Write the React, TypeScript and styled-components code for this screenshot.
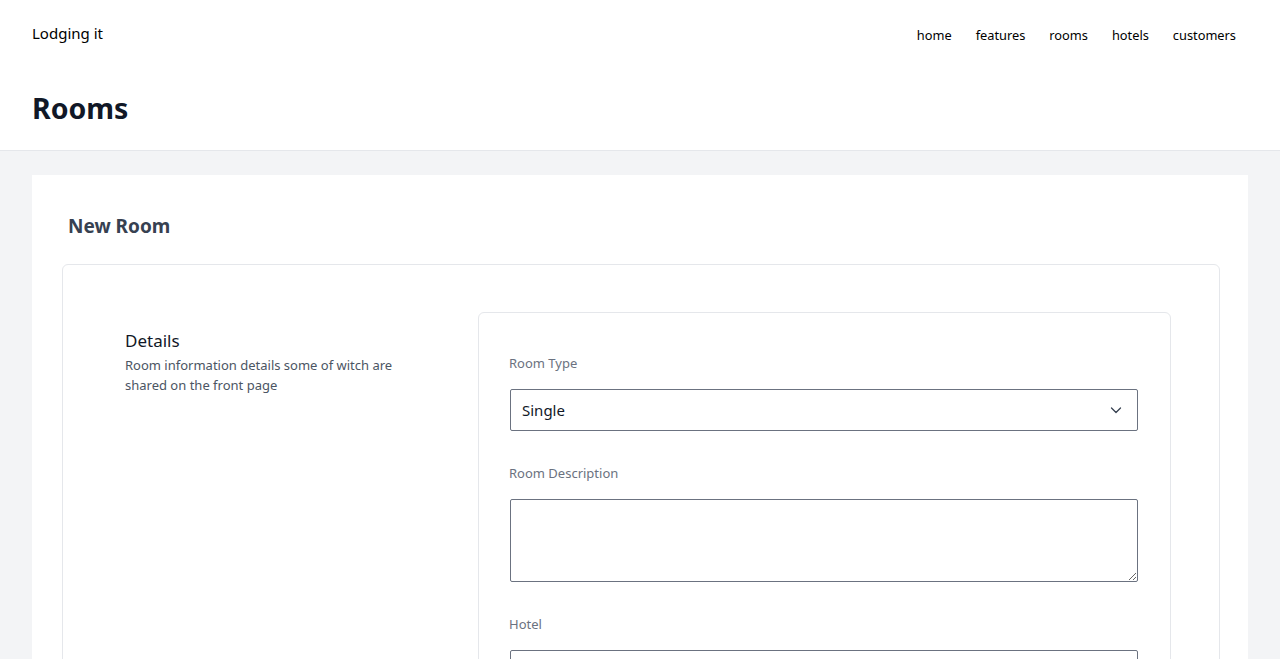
import React from "react";
import styled, { createGlobalStyle } from "styled-components";

const GlobalStyle = createGlobalStyle`
  * { box-sizing: border-box; }
  body {
    margin: 0;
    font-family: "Noto Sans", "Open Sans", sans-serif;
    background: #f3f4f6;
    color: #111827;
  }
`;

const Header = styled.header`
  background: #fff;
  border-bottom: 1px solid #e5e7eb;
`;

const TopBar = styled.div`
  display: flex;
  align-items: center;
  justify-content: space-between;
  height: 68px;
  padding: 0 32px;
  line-height: 20px;
`;

const Brand = styled.div`
  font-size: 15px;
  color: #000;
  padding-bottom: 2px;
`;

const Nav = styled.nav`
  display: flex;
  padding-top: 2px;
`;

const NavLink = styled.a`
  font-size: 12.8px;
  color: #000;
  padding: 0 12px;
  text-decoration: none;
`;

const PageTitle = styled.h1`
  margin: 0;
  padding: 22px 32px 24px;
  font-size: 28.5px;
  line-height: 36px;
  font-weight: 700;
  color: #111827;
`;

const Main = styled.main`
  padding: 24px 32px 0;
`;

const Card = styled.section`
  background: #fff;
  padding: 37px 28px 40px 30px;
`;

const CardTitle = styled.h2`
  margin: 0 0 24px;
  padding-left: 6px;
  font-size: 19px;
  line-height: 28px;
  font-weight: 700;
  color: #374151;
`;

const Panel = styled.div`
  border: 1px solid #e5e7eb;
  border-radius: 6px;
  padding: 47px 48px 48px 62px;
  display: flex;
  gap: 48px;
`;

const Aside = styled.div`
  flex: 0 0 305px;
  padding-top: 17px;
`;

const AsideTitle = styled.h3`
  margin: 0;
  font-size: 17px;
  line-height: 24px;
  font-weight: 400;
  color: #111827;
`;

const AsideText = styled.p`
  margin: 2px 0 0;
  font-size: 13px;
  line-height: 20px;
  color: #4b5563;
`;

const FormBox = styled.div`
  flex: 1;
  border: 1px solid #e5e7eb;
  border-radius: 6px;
  padding: 40px 32px 40px 31px;
  display: flex;
  flex-direction: column;
  gap: 32px;
`;

const Field = styled.div`
  display: flex;
  flex-direction: column;
  gap: 16px;
`;

const Label = styled.label`
  font-size: 13px;
  line-height: 20px;
  color: #6b7280;
  margin-left: -1px;
`;

const SelectWrap = styled.div`
  position: relative;
`;

const Select = styled.select`
  appearance: none;
  width: 100%;
  height: 42px;
  border: 1px solid #6b7280;
  border-radius: 2px;
  background: #fff;
  padding: 0 40px 0 11px;
  font-family: inherit;
  font-size: 15px;
  color: #111827;
`;

const Chevron = styled.svg`
  position: absolute;
  right: 16px;
  top: 15px;
  pointer-events: none;
`;

const TextArea = styled.textarea`
  display: block;
  width: 100%;
  height: 83px;
  border: 1px solid #6b7280;
  border-radius: 2px;
  font-family: inherit;
  font-size: 15px;
  padding: 8px 11px;
`;

const Input = styled.input`
  width: 100%;
  height: 42px;
  border: 1px solid #6b7280;
  border-radius: 2px;
  font-family: inherit;
  font-size: 15px;
  padding: 0 11px;
`;

const navItems = ["home", "features", "rooms", "hotels", "customers"];

export default function App() {
  return (
    <>
      <GlobalStyle />
      <Header>
        <TopBar>
          <Brand>Lodging it</Brand>
          <Nav>
            {navItems.map((item) => (
              <NavLink key={item} href="#">
                {item}
              </NavLink>
            ))}
          </Nav>
        </TopBar>
        <PageTitle>Rooms</PageTitle>
      </Header>
      <Main>
        <Card>
          <CardTitle>New Room</CardTitle>
          <Panel>
            <Aside>
              <AsideTitle>Details</AsideTitle>
              <AsideText>
                Room information details some of witch are
                <br />
                shared on the front page
              </AsideText>
            </Aside>
            <FormBox>
              <Field>
                <Label>Room Type</Label>
                <SelectWrap>
                  <Select defaultValue="Single">
                    <option>Single</option>
                    <option>Double</option>
                    <option>Suite</option>
                  </Select>
                  <Chevron width="12" height="12" viewBox="0 0 12 12" fill="none">
                    <path d="M1.5 4l4.5 4.5L10.5 4" stroke="#374151" strokeWidth="1.3" strokeLinecap="round" strokeLinejoin="round" />
                  </Chevron>
                </SelectWrap>
              </Field>
              <Field>
                <Label>Room Description</Label>
                <TextArea />
              </Field>
              <Field>
                <Label>Hotel</Label>
                <Input />
              </Field>
            </FormBox>
          </Panel>
        </Card>
      </Main>
    </>
  );
}
